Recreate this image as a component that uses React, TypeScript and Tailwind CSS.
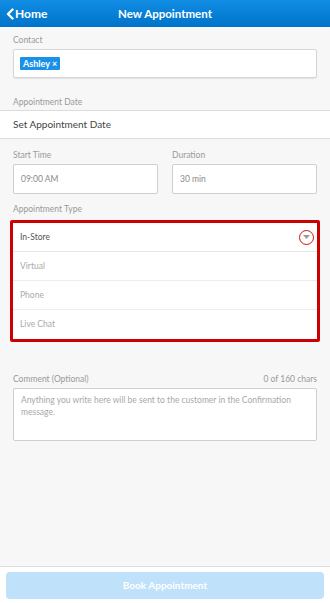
import React from 'react';

const font = { fontFamily: 'Lato, "Open Sans", sans-serif' };

function Label({ children }: { children: React.ReactNode }) {
  return <div className="text-[8.5px] leading-[12px] text-[#9a9a9a]">{children}</div>;
}

export default function App() {
  const types = ['Virtual', 'Phone', 'Live Chat'];
  return (
    <div className="h-screen flex flex-col bg-[#f7f7f7]" style={font}>
      {/* Header */}
      <div className="h-[27px] shrink-0 relative flex items-center bg-gradient-to-b from-[#118de3] to-[#0073ca] text-white">
        <div className="flex items-center pl-[6px] gap-[1px] font-bold text-[12px]">
          <svg width="8" height="12" viewBox="0 0 8 12">
            <path d="M6.5 1.5 L2 6 L6.5 10.5" fill="none" stroke="white" strokeWidth="2.4" strokeLinecap="round" strokeLinejoin="round" />
          </svg>
          <span>Home</span>
        </div>
        <div className="absolute inset-0 flex items-center justify-center font-bold text-[11.5px] pointer-events-none">
          New Appointment
        </div>
      </div>

      {/* Contact */}
      <div className="px-[13px] pt-[7px]">
        <Label>Contact</Label>
        <div className="mt-[3px] h-[29px] bg-white border border-[#d6d6d6] rounded-[2px] shadow-[0_1px_1px_rgba(0,0,0,0.08)] flex items-center px-[6px]">
          <span className="bg-[#1a91e8] text-white text-[9px] font-bold leading-[13px] px-[3px] rounded-[1px]">
            Ashley ×
          </span>
        </div>
      </div>

      {/* Appointment Date */}
      <div className="px-[13px] mt-[18px]">
        <Label>Appointment Date</Label>
      </div>
      <div className="mt-[2px] h-[29px] bg-white border-y border-[#dcdcdc] flex items-center px-[13px] text-[10px] text-[#444]">
        Set Appointment Date
      </div>

      {/* Time / Duration */}
      <div className="px-[13px] mt-[10px] grid grid-cols-2 gap-[14px]">
        <div>
          <Label>Start Time</Label>
          <div className="mt-[3px] h-[30px] bg-white border border-[#cfcfcf] rounded-[2px] flex items-center px-[7px] text-[8.5px] text-[#8a8a8a]">
            09:00 AM
          </div>
        </div>
        <div>
          <Label>Duration</Label>
          <div className="mt-[3px] h-[30px] bg-white border border-[#cfcfcf] rounded-[2px] flex items-center px-[7px] text-[8.5px] text-[#8a8a8a]">
            30 min
          </div>
        </div>
      </div>

      {/* Appointment Type */}
      <div className="px-[13px] mt-[9px]">
        <Label>Appointment Type</Label>
      </div>
      <div className="mx-[10px] mt-[5px] border-[3px] border-[#cc0000] rounded-[2px] bg-white">
        <div className="h-[29px] flex items-center justify-between pl-[7px] pr-[3px] border-b border-[#e6e6e6] text-[8.5px] text-[#555]">
          <span>In-Store</span>
          <div className="w-[15px] h-[15px] rounded-full border border-[#d01010] flex items-center justify-center">
            <svg width="7" height="4" viewBox="0 0 7 4">
              <path d="M0 0 L7 0 L3.5 4 Z" fill="#9a9a9a" />
            </svg>
          </div>
        </div>
        {types.map((t, i) => (
          <div
            key={t}
            className={
              'h-[29px] flex items-center px-[7px] text-[8.5px] text-[#aaaaaa] ' +
              (i < types.length - 1 ? 'border-b border-[#ececec]' : '')
            }
          >
            {t}
          </div>
        ))}
      </div>

      {/* Comment */}
      <div className="px-[13px] mt-[31px]">
        <div className="flex justify-between">
          <Label>Comment (Optional)</Label>
          <Label>0 of 160 chars</Label>
        </div>
        <div className="mt-[3px] h-[53px] bg-white border border-[#cfcfcf] rounded-[2px] pl-[7px] pr-[12px] py-[5px] text-[8.5px] leading-[12px] text-[#a8a8a8]">
          Anything you write here will be sent to the customer in the Confirmation message.
        </div>
      </div>

      {/* Footer */}
      <div className="mt-auto border-t border-[#dedede] px-[6px] pt-[5px] pb-[4px] bg-white">
        <div className="h-[27px] rounded-[4px] bg-[#bfe1f9] flex items-center justify-center text-white font-bold text-[10px]">
          Book Appointment
        </div>
      </div>
    </div>
  );
}
